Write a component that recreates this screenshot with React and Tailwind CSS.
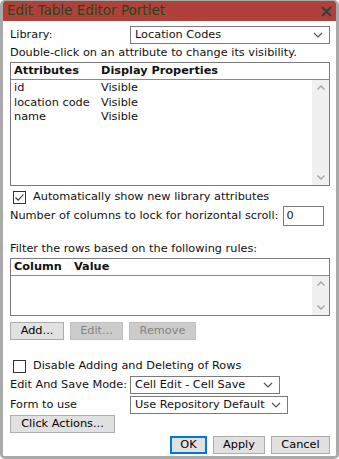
import React from "react";

const font = { fontFamily: '"DejaVu Sans", Verdana, sans-serif' };

function Chevron() {
  return (
    <svg width="10" height="6" viewBox="0 0 10 6" className="shrink-0">
      <path d="M1 1 L5 5 L9 1" fill="none" stroke="#555" strokeWidth="1.2" />
    </svg>
  );
}

function Select({ value, className }) {
  return (
    <div className={"flex items-center justify-between border border-[#7a7a7a] bg-white h-[18px] pl-[4px] pr-[6px] whitespace-nowrap " + className}>
      <span className="leading-none">{value}</span>
      <Chevron />
    </div>
  );
}

function Btn({ children, disabled, primary, className }) {
  return (
    <div
      className={
        "flex items-center justify-center h-[18px] leading-none whitespace-nowrap " +
        (disabled
          ? "bg-[#cccccc] border border-[#bfbfbf] text-[#838383] "
          : primary
          ? "bg-[#e1e1e1] border-2 border-[#0078d7] text-black "
          : "bg-[#e1e1e1] border border-[#adadad] text-black ") +
        className
      }
    >
      {children}
    </div>
  );
}

function ScrollBar() {
  return (
    <div className="w-[17px] bg-[#f0f0f0] flex flex-col justify-between items-center py-[5px]">
      <svg width="8" height="5" viewBox="0 0 8 5"><path d="M0.5 4.5 L4 1 L7.5 4.5" fill="none" stroke="#a3a3a3" strokeWidth="1.3" /></svg>
      <svg width="8" height="5" viewBox="0 0 8 5"><path d="M0.5 0.5 L4 4 L7.5 0.5" fill="none" stroke="#a3a3a3" strokeWidth="1.3" /></svg>
    </div>
  );
}

function Checkbox({ checked }) {
  return (
    <div className="w-[13px] h-[13px] border border-[#333] bg-white flex items-center justify-center shrink-0">
      {checked && (
        <svg width="11" height="11" viewBox="0 0 11 11">
          <path d="M1.5 5.5 L4.2 8.2 L9.5 2.5" fill="none" stroke="#333" strokeWidth="1.1" />
        </svg>
      )}
    </div>
  );
}

export default function App() {
  return (
    <div className="w-[339px] h-[459px] bg-white text-[11.3px] text-[#111] whitespace-nowrap" style={font}>
      <div className="w-full h-full rounded-[5px] border-x-[3px] border-b-[3px] border-t border-[#a9a9a9] flex flex-col overflow-hidden">
        <div className="h-[20px] bg-[#b0413a] flex items-center justify-between pl-[4px] pr-[4px] shrink-0">
          <span className="text-[#24461c] text-[13.5px] leading-none">Edit Table Editor Portlet</span>
          <svg width="11" height="11" viewBox="0 0 11 11">
            <path d="M1 1 L10 10 M10 1 L1 10" stroke="#3c3c3c" strokeWidth="2.2" />
          </svg>
        </div>
        <div className="flex-1 bg-white pl-[3px] pr-[6px] pt-[5px] flex flex-col">
          <div className="flex items-center h-[18px]">
            <span className="w-[124px] pl-[4px]">Library:</span>
            <Select value="Location Codes" className="w-[200px]" />
          </div>
          <div className="pl-[4px] h-[18px] flex items-center">Double-click on an attribute to change its visibility.</div>
          <div className="ml-[4px] w-[320px] h-[124px] border border-[#7a7a7a] flex flex-col">
            <div className="h-[17px] border-b border-[#8a8a8a] flex items-center font-bold pl-[3px]">
              <span className="w-[87px]">Attributes</span>
              <span>Display Properties</span>
            </div>
            <div className="flex flex-1">
              <div className="flex-1 pl-[3px] pt-[1px] leading-[14.5px]">
                <div className="flex"><span className="w-[87px]">id</span><span>Visible</span></div>
                <div className="flex"><span className="w-[87px]">location code</span><span>Visible</span></div>
                <div className="flex"><span className="w-[87px]">name</span><span>Visible</span></div>
              </div>
              <ScrollBar />
            </div>
          </div>
          <div className="flex items-center pl-[7px] mt-[4px] h-[14px] gap-[7px]">
            <Checkbox checked />
            <span>Automatically show new library attributes</span>
          </div>
          <div className="flex items-center pl-[4px] mt-[2px] h-[20px] gap-[5px]">
            <span>Number of columns to lock for horizontal scroll:</span>
            <div className="w-[41px] h-[20px] border border-[#7a7a7a] flex items-center pl-[2px]">0</div>
          </div>
          <div className="pl-[4px] mt-[15px] h-[17px] flex items-center">Filter the rows based on the following rules:</div>
          <div className="ml-[4px] w-[320px] h-[58px] border border-[#7a7a7a] flex flex-col">
            <div className="h-[17px] border-b border-[#8a8a8a] flex items-center font-bold pl-[3px]">
              <span className="w-[60px]">Column</span>
              <span>Value</span>
            </div>
            <div className="flex flex-1">
              <div className="flex-1" />
              <ScrollBar />
            </div>
          </div>
          <div className="flex ml-[4px] mt-[6px] gap-[6px]">
            <Btn className="w-[54px]">Add...</Btn>
            <Btn disabled className="w-[53px]">Edit...</Btn>
            <Btn disabled className="w-[67px]">Remove</Btn>
          </div>
          <div className="flex items-center pl-[7px] mt-[19px] h-[14px] gap-[7px]">
            <Checkbox />
            <span>Disable Adding and Deleting of Rows</span>
          </div>
          <div className="flex items-center mt-[3px] h-[18px]">
            <span className="w-[124px] pl-[4px]">Edit And Save Mode:</span>
            <Select value="Cell Edit - Cell Save" className="w-[150px]" />
          </div>
          <div className="flex items-center mt-[2px] h-[18px]">
            <span className="w-[124px] pl-[4px]">Form to use</span>
            <Select value="Use Repository Default" className="w-[158px]" />
          </div>
          <div className="flex ml-[4px] mt-[1px]">
            <Btn className="w-[105px]">Click Actions...</Btn>
          </div>
          <div className="flex justify-end gap-[6px] mt-[3px]">
            <Btn primary className="w-[37px]">OK</Btn>
            <Btn className="w-[52px]">Apply</Btn>
            <Btn className="w-[59px]">Cancel</Btn>
          </div>
        </div>
      </div>
    </div>
  );
}
